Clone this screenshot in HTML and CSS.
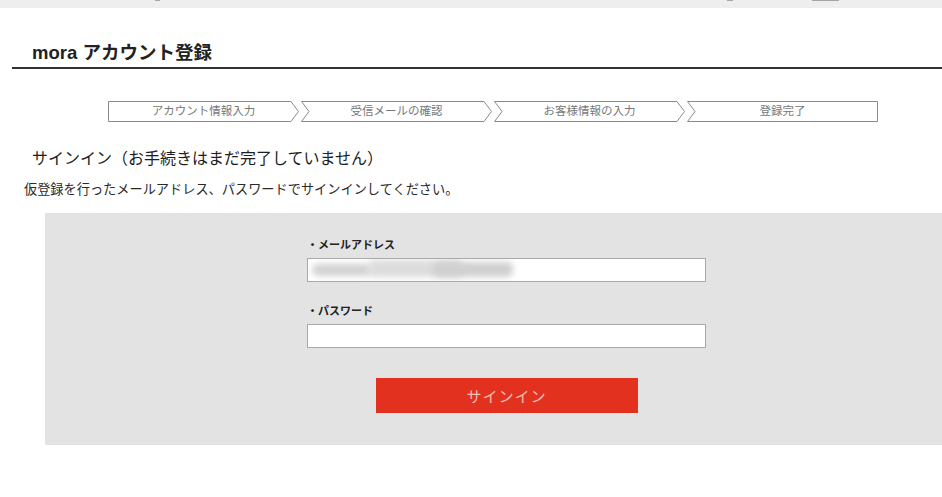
FILE: index.html
```html
<!DOCTYPE html>
<html lang="ja">
<head>
<meta charset="utf-8">
<title>mora アカウント登録</title>
<link rel="stylesheet" href="styles.css">
</head>
<body>
<div class="topbar">
  <span class="cut cut-a"></span>
  <span class="cut cut-b"></span>
  <span class="cut cut-c"></span>
</div>

<h1 class="page-title">mora アカウント登録</h1>

<ol class="steps">
  <li class="step">
    <svg class="step-bg" viewBox="0 0 190 21" preserveAspectRatio="none"><polygon points="0.5,0.5 182,0.5 189.5,10.5 182,20.5 0.5,20.5"/></svg>
    <span class="step-label">アカウント情報入力</span>
  </li>
  <li class="step">
    <svg class="step-bg" viewBox="0 0 190 21" preserveAspectRatio="none"><polygon points="0.5,0.5 182,0.5 189.5,10.5 182,20.5 0.5,20.5 8,10.5"/></svg>
    <span class="step-label">受信メールの確認</span>
  </li>
  <li class="step">
    <svg class="step-bg" viewBox="0 0 190 21" preserveAspectRatio="none"><polygon points="0.5,0.5 182,0.5 189.5,10.5 182,20.5 0.5,20.5 8,10.5"/></svg>
    <span class="step-label">お客様情報の入力</span>
  </li>
  <li class="step">
    <svg class="step-bg" viewBox="0 0 190 21" preserveAspectRatio="none"><polygon points="0.5,0.5 189.5,0.5 189.5,20.5 0.5,20.5 8,10.5"/></svg>
    <span class="step-label">登録完了</span>
  </li>
</ol>

<h2 class="section-title">サインイン（お手続きはまだ完了していません）</h2>
<p class="lead">仮登録を行ったメールアドレス、パスワードでサインインしてください。</p>

<div class="panel">
  <form class="signin-form">
    <div class="field-label">・メールアドレス</div>
    <div class="field">
      <span class="blur blur-1"></span>
      <span class="blur blur-2"></span>
      <span class="blur blur-3"></span>
    </div>
    <div class="field-label second">・パスワード</div>
    <div class="field"></div>
    <div class="btn-row">
      <button type="button" class="signin-btn">サインイン</button>
    </div>
  </form>
</div>
</body>
</html>
```

FILE: styles.css
```css
* { box-sizing: border-box; }

html, body {
  margin: 0;
  padding: 0;
  background: #ffffff;
}

body {
  font-family: "Liberation Sans", "Noto Sans CJK JP", sans-serif;
  color: #222222;
  width: 942px;
  overflow: hidden;
}

.topbar {
  height: 8px;
  background: #eeeeee;
  position: relative;
}

.cut {
  position: absolute;
  top: 0;
  height: 1px;
  background: #777;
  opacity: 0.6;
}
.cut-a { left: 155px; width: 5px; }
.cut-b { left: 727px; width: 6px; }
.cut-c { left: 812px; width: 27px; }

.page-title {
  margin: 33px 0 0 12px;
  padding: 0 0 2px 20px;
  font-size: 18.5px;
  line-height: 24px;
  font-weight: bold;
  color: #222;
  border-bottom: 2px solid #333333;
}

.steps {
  list-style: none;
  margin: 32px 0 0 108px;
  padding: 0;
  width: 770px;
  height: 21px;
  display: flex;
  gap: 2px;
}

.step {
  flex: 1;
  position: relative;
  display: flex;
  align-items: center;
  justify-content: center;
}

.step-bg {
  position: absolute;
  inset: 0;
  width: 100%;
  height: 100%;
}

.step-bg polygon {
  fill: #ffffff;
  stroke: #8a8a8a;
  stroke-width: 1;
  vector-effect: non-scaling-stroke;
}

.step-label {
  position: relative;
  font-size: 11.5px;
  line-height: 21px;
  color: #777777;
}

.section-title {
  margin: 26px 0 0 32px;
  font-size: 16px;
  line-height: 22px;
  font-weight: normal;
  color: #1e1e1e;
}

.lead {
  margin: 11px 0 0 24px;
  font-size: 13.2px;
  line-height: 18px;
  color: #2a2a2a;
}

.panel {
  margin: 14px 0 0 45px;
  height: 232px;
  background: #e3e3e3;
  padding: 24px 0 0 262px;
}

.signin-form {
  width: 399px;
  margin: 0;
}

.field-label {
  font-size: 11px;
  line-height: 16px;
  font-weight: bold;
  color: #222;
}

.field-label.second {
  margin-top: 21px;
}

.field {
  margin-top: 5px;
  height: 24px;
  background: #ffffff;
  border: 1px solid #a9a9a9;
  position: relative;
  overflow: hidden;
}

.blur {
  position: absolute;
  filter: blur(3px);
  border-radius: 6px;
}
.blur-1 { left: 4px; top: 5px; width: 60px; height: 12px; background: #d2d2d2; }
.blur-2 { left: 60px; top: 1px; width: 95px; height: 17px; background: #dcdcdc; }
.blur-3 { left: 125px; top: 3px; width: 80px; height: 15px; background: #d0d0d0; }

.btn-row {
  margin-top: 30px;
  display: flex;
  justify-content: center;
}

.signin-btn {
  width: 262px;
  height: 35px;
  border: 0;
  border-radius: 0;
  background: #e2311e;
  color: #f7c0b5;
  font-family: "Liberation Sans", "Noto Sans CJK JP", sans-serif;
  font-size: 15px;
  font-weight: normal;
  letter-spacing: 1px;
  padding: 0;
}
```
